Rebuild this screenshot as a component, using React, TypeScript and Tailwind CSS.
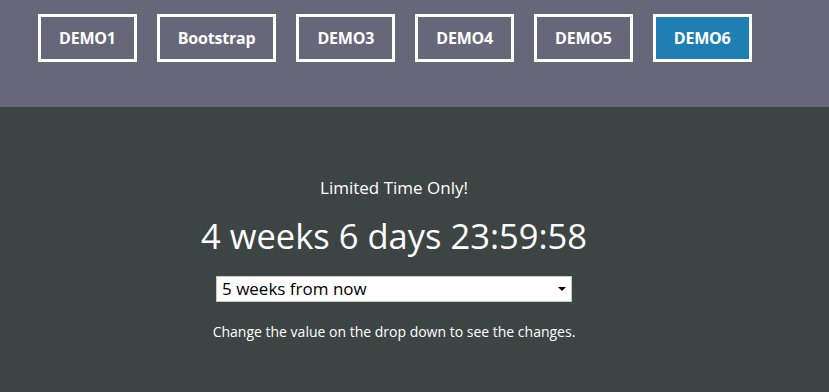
import React, { useState } from "react";

const demos = ["DEMO1", "Bootstrap", "DEMO3", "DEMO4", "DEMO5", "DEMO6"];

const options = ["1 week from now", "2 weeks from now", "3 weeks from now", "4 weeks from now", "5 weeks from now"];

export default function App() {
  const [value, setValue] = useState("5 weeks from now");

  return (
    <div className="min-h-[392px] bg-[#3d4444] text-white" style={{ fontFamily: '"Open Sans", "Noto Sans", sans-serif' }}>
      <header className="h-[107px] bg-[#676779] pl-[38px] pt-[14px]">
        <nav className="flex gap-[20px]">
          {demos.map((d) => (
            <a
              key={d}
              href="#"
              className={`flex h-[48px] items-center border-[3px] border-white px-[18px] text-[16px] font-bold tracking-[-0.2px] ${
                d === "DEMO6" ? "bg-[#1f7fb3]" : ""
              }`}
            >
              {d}
            </a>
          ))}
        </nav>
      </header>

      <main className="flex w-[788px] flex-col items-center pt-[69px] text-center">
        <p className="text-[17px] leading-[24px]">Limited Time Only!</p>
        <h1 className="mt-[12px] text-[34.5px] leading-[48px]">4 weeks 6 days 23:59:58</h1>
        <div className="relative mt-[16px] w-[356px]">
          <select
            value={value}
            onChange={(e) => setValue(e.target.value)}
            className="h-[26px] w-full appearance-none border border-[#c8c8c8] bg-white pl-[5px] text-[17px] leading-[24px] text-black outline-none"
          >
            {options.map((o) => (
              <option key={o}>{o}</option>
            ))}
          </select>
          <span className="pointer-events-none absolute right-[6px] top-[11px] h-0 w-0 border-x-[4px] border-t-[4px] border-x-transparent border-t-black" />
        </div>
        <p className="mt-[21px] text-[14px] leading-[18px]">Change the value on the drop down to see the changes.</p>
      </main>
    </div>
  );
}
